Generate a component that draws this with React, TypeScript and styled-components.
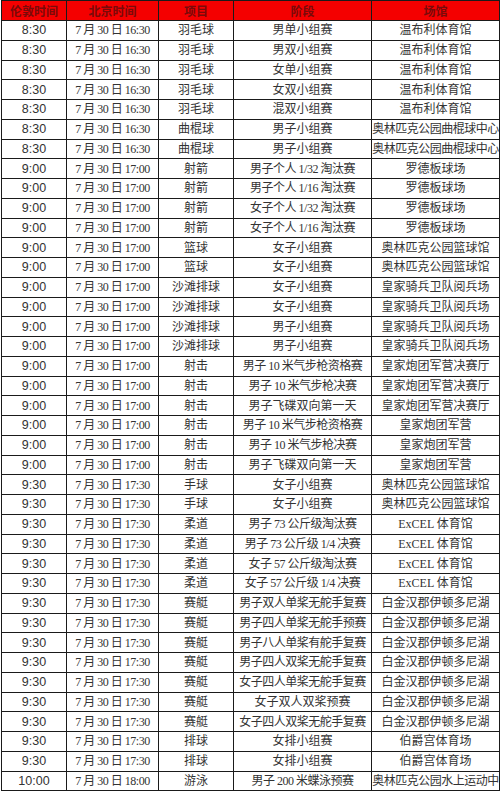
import styled, { createGlobalStyle } from 'styled-components';

const GlobalStyle = createGlobalStyle`
  html, body {
    margin: 0;
    padding: 0;
    background: #ffffff;
  }
  body {
    font-family: 'Liberation Serif', 'Noto Sans CJK SC', serif;
    color: #1a1a1a;
  }
`;

type Row = [string, string, string, string, string];

const B = '7 月 30 日 16:30';
const C = '7 月 30 日 17:00';
const D = '7 月 30 日 17:30';

const rows: Row[] = [
  ['8:30', B, '羽毛球', '男单小组赛', '温布利体育馆'],
  ['8:30', B, '羽毛球', '男双小组赛', '温布利体育馆'],
  ['8:30', B, '羽毛球', '女单小组赛', '温布利体育馆'],
  ['8:30', B, '羽毛球', '女双小组赛', '温布利体育馆'],
  ['8:30', B, '羽毛球', '混双小组赛', '温布利体育馆'],
  ['8:30', B, '曲棍球', '男子小组赛', '奥林匹克公园曲棍球中心'],
  ['8:30', B, '曲棍球', '男子小组赛', '奥林匹克公园曲棍球中心'],
  ['9:00', C, '射箭', '男子个人 1/32 淘汰赛', '罗德板球场'],
  ['9:00', C, '射箭', '男子个人 1/16 淘汰赛', '罗德板球场'],
  ['9:00', C, '射箭', '女子个人 1/32 淘汰赛', '罗德板球场'],
  ['9:00', C, '射箭', '女子个人 1/16 淘汰赛', '罗德板球场'],
  ['9:00', C, '篮球', '女子小组赛', '奥林匹克公园篮球馆'],
  ['9:00', C, '篮球', '女子小组赛', '奥林匹克公园篮球馆'],
  ['9:00', C, '沙滩排球', '女子小组赛', '皇家骑兵卫队阅兵场'],
  ['9:00', C, '沙滩排球', '女子小组赛', '皇家骑兵卫队阅兵场'],
  ['9:00', C, '沙滩排球', '男子小组赛', '皇家骑兵卫队阅兵场'],
  ['9:00', C, '沙滩排球', '男子小组赛', '皇家骑兵卫队阅兵场'],
  ['9:00', C, '射击', '男子 10 米气步枪资格赛', '皇家炮团军营决赛厅'],
  ['9:00', C, '射击', '男子 10 米气步枪决赛', '皇家炮团军营决赛厅'],
  ['9:00', C, '射击', '男子飞碟双向第一天', '皇家炮团军营决赛厅'],
  ['9:00', C, '射击', '男子 10 米气步枪资格赛', '皇家炮团军营'],
  ['9:00', C, '射击', '男子 10 米气步枪决赛', '皇家炮团军营'],
  ['9:00', C, '射击', '男子飞碟双向第一天', '皇家炮团军营'],
  ['9:30', D, '手球', '女子小组赛', '奥林匹克公园篮球馆'],
  ['9:30', D, '手球', '女子小组赛', '奥林匹克公园篮球馆'],
  ['9:30', D, '柔道', '男子 73 公斤级淘汰赛', 'ExCEL 体育馆'],
  ['9:30', D, '柔道', '男子 73 公斤级 1/4 决赛', 'ExCEL 体育馆'],
  ['9:30', D, '柔道', '女子 57 公斤级淘汰赛', 'ExCEL 体育馆'],
  ['9:30', D, '柔道', '女子 57 公斤级 1/4 决赛', 'ExCEL 体育馆'],
  ['9:30', D, '赛艇', '男子双人单桨无舵手复赛', '白金汉郡伊顿多尼湖'],
  ['9:30', D, '赛艇', '男子四人单桨无舵手预赛', '白金汉郡伊顿多尼湖'],
  ['9:30', D, '赛艇', '男子八人单桨有舵手复赛', '白金汉郡伊顿多尼湖'],
  ['9:30', D, '赛艇', '男子四人双桨无舵手复赛', '白金汉郡伊顿多尼湖'],
  ['9:30', D, '赛艇', '女子四人单桨无舵手复赛', '白金汉郡伊顿多尼湖'],
  ['9:30', D, '赛艇', '女子双人双桨预赛', '白金汉郡伊顿多尼湖'],
  ['9:30', D, '赛艇', '女子四人双桨无舵手复赛', '白金汉郡伊顿多尼湖'],
  ['9:30', D, '排球', '女排小组赛', '伯爵宫体育场'],
  ['9:30', D, '排球', '女排小组赛', '伯爵宫体育场'],
  ['10:00', '7 月 30 日 18:00', '游泳', '男子 200 米蝶泳预赛', '奥林匹克公园水上运动中'],
];

const headers = ['伦敦时间', '北京时间', '项目', '阶段', '场馆'];
const widths = [65, 92, 75, 138, 128];

const Sheet = styled.table`
  width: 498px;
  margin-left: 1px;
  border-collapse: collapse;
  table-layout: fixed;
`;

const HeadCell = styled.th`
  height: 19px;
  padding: 0;
  background: #f40000;
  color: #7a0a0a;
  font-family: 'Noto Sans CJK SC', sans-serif;
  font-size: 12px;
  font-weight: 700;
  text-align: center;
  border: 1px solid #1a1a1a;
  line-height: 18px;
`;

const BodyRow = styled.tr`
  height: 19.75px;
`;

const Cell = styled.td<{ $sans?: boolean; $tight?: boolean }>`
  padding: 0;
  border: 1px solid #1a1a1a;
  text-align: center;
  white-space: nowrap;
  overflow: hidden;
  font-size: ${(p) => (p.$sans ? '12.5px' : '12px')};
  letter-spacing: ${(p) => (p.$tight ? '-0.5px' : '0')};
  font-family: ${(p) =>
    p.$sans
      ? "'Liberation Sans', 'Noto Sans CJK SC', sans-serif"
      : "'Liberation Serif', 'Noto Sans CJK SC', serif"};
  line-height: 18px;
  color: #333333;
`;

export default function App() {
  return (
    <>
      <GlobalStyle />
      <Sheet>
        <colgroup>
          {widths.map((w, i) => (
            <col key={i} style={{ width: w }} />
          ))}
        </colgroup>
        <thead>
          <tr>
            {headers.map((h) => (
              <HeadCell key={h}>{h}</HeadCell>
            ))}
          </tr>
        </thead>
        <tbody>
          {rows.map((r, i) => (
            <BodyRow key={i}>
              {r.map((v, j) => (
                <Cell key={j} $sans={j === 0} $tight={v.length >= 11}>
                  {v}
                </Cell>
              ))}
            </BodyRow>
          ))}
        </tbody>
      </Sheet>
    </>
  );
}
